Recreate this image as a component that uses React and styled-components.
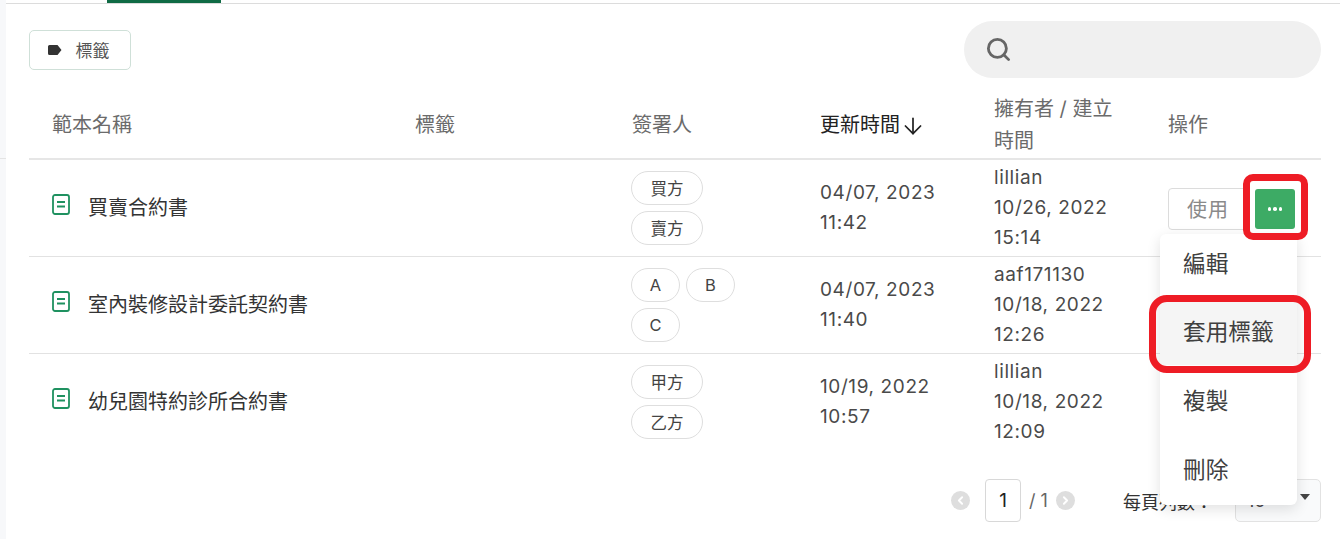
import React from 'react'
import styled, { createGlobalStyle } from 'styled-components'
import { Search, ArrowDown, ChevronLeft, ChevronRight } from 'lucide-react'

const GlobalStyle = createGlobalStyle`
  html, body {
    margin: 0;
    height: 539px;
    overflow: hidden;
    background: #fff;
    font-family: "Inter", "Noto Sans CJK TC", sans-serif;
    color: #3c3c3c;
  }
`

const rows = [
  { name: '買賣合約書', signers: ['買方', '賣方'], wide: true, updated: ['04/07, 2023', '11:42'], owner: ['lillian', '10/26, 2022', '15:14'], actions: true },
  { name: '室內裝修設計委託契約書', signers: ['A', 'B', 'C'], updated: ['04/07, 2023', '11:40'], owner: ['aaf171130', '10/18, 2022', '12:26'] },
  { name: '幼兒園特約診所合約書', signers: ['甲方', '乙方'], wide: true, updated: ['10/19, 2022', '10:57'], owner: ['lillian', '10/18, 2022', '12:09'] },
]

function DocIcon() {
  return (
    <svg width="18" height="21" viewBox="0 0 18 21" fill="none" stroke="#1f9160" strokeWidth="1.8">
      <rect x="1" y="1" width="16" height="19" rx="2" />
      <path d="M5 8h8M5 12.5h8" />
    </svg>
  )
}

function TagIcon() {
  return (
    <svg width="14" height="10" viewBox="0 0 14 10">
      <path d="M1.5 0H9.5L13.5 5L9.5 10H1.5A1.5 1.5 0 0 1 0 8.5V1.5A1.5 1.5 0 0 1 1.5 0Z" fill="#333" />
    </svg>
  )
}

function App() {
  return (
    <Shell>
      <GlobalStyle />
      <Sidebar><SidebarLine /></Sidebar>
      <Main>
        <Tabs><ActiveTab /></Tabs>
        <Content>
          <Toolbar>
            <TagButton><TagIcon />標籤</TagButton>
            <SearchBox><Search size={27} color="#666" strokeWidth={2.5} /></SearchBox>
          </Toolbar>
          <Table>
            <colgroup>
              <col width="363" />
              <col width="217" />
              <col width="188" />
              <col width="174" />
              <col width="174" />
              <col width="176" />
            </colgroup>
            <thead>
              <tr>
                <Th>範本名稱</Th>
                <Th>標籤</Th>
                <Th>簽署人</Th>
                <Th $active>更新時間<ArrowDown size={26} strokeWidth={1.6} /></Th>
                <Th>擁有者 / 建立時間</Th>
                <Th>操作</Th>
              </tr>
            </thead>
            <tbody>
              {rows.map((row) => (
                <tr key={row.name}>
                  <Td><NameCell><DocIcon />{row.name}</NameCell></Td>
                  <Td />
                  <Td>
                    <Signers>
                      {row.signers.map((s) => <Signer key={s} $wide={row.wide}>{s}</Signer>)}
                    </Signers>
                  </Td>
                  <Td><DateText>{row.updated.map((l) => <div key={l}>{l}</div>)}</DateText></Td>
                  <Td><DateText>{row.owner.map((l) => <div key={l}>{l}</div>)}</DateText></Td>
                  <Td>
                    {row.actions && (
                      <Actions>
                        <UseButton>使用</UseButton>
                        <MoreButton><Dot /><Dot /><Dot /></MoreButton>
                      </Actions>
                    )}
                  </Td>
                </tr>
              ))}
            </tbody>
          </Table>
          <Footer>
            <PageNav><ChevronLeft size={13} strokeWidth={3.5} color="#fff" /></PageNav>
            <PageInput>1</PageInput>
            <PageTotal>/ 1</PageTotal>
            <PageNav><ChevronRight size={13} strokeWidth={3.5} color="#fff" /></PageNav>
            <PerPage>每頁列數：</PerPage>
            <PerPageSelect>10<Caret /></PerPageSelect>
          </Footer>
        </Content>
      </Main>
      <Menu>
        <MenuItem>編輯</MenuItem>
        <MenuItem $hover>套用標籤</MenuItem>
        <MenuItem>複製</MenuItem>
        <MenuItem>刪除</MenuItem>
      </Menu>
      <MoreHighlight />
      <ItemHighlight />
    </Shell>
  )
}

export default App

const Shell = styled.div`
  position: relative;
  display: flex;
  width: 1340px;
  height: 539px;
  overflow: hidden;
`

const Sidebar = styled.div`
  width: 6px;
  flex: none;
  background: #f7f8fa;
  padding-top: 158px;
  box-sizing: border-box;
`

const SidebarLine = styled.div`
  height: 1px;
  background: #e4e4e4;
`

const Main = styled.div`
  flex: 1;
  min-width: 0;
`

const Tabs = styled.div`
  height: 4px;
  box-sizing: border-box;
  border-bottom: 1px solid #dcdcdc;
  padding-left: 101px;
`

const ActiveTab = styled.div`
  width: 114px;
  height: 3px;
  background: #0f6b45;
`

const Content = styled.div`
  padding: 17px 19px 0 23px;
`

const Toolbar = styled.div`
  display: flex;
  justify-content: space-between;
  align-items: center;
  height: 57px;
`

const TagButton = styled.div`
  width: 102px;
  height: 40px;
  box-sizing: border-box;
  display: flex;
  align-items: center;
  justify-content: center;
  gap: 14px;
  padding-right: 3px;
  border: 1px solid #cfe0d8;
  border-radius: 5px;
  font-size: 17px;
  color: #555;
`

const SearchBox = styled.div`
  width: 357px;
  height: 57px;
  box-sizing: border-box;
  display: flex;
  align-items: center;
  padding-left: 21px;
  background: #f0f0f0;
  border-radius: 29px;
`

const Table = styled.table`
  width: 1292px;
  margin-top: 12px;
  table-layout: fixed;
  border-collapse: collapse;
`

const Th = styled.th`
  height: 69px;
  padding: 2px 23px 0;
  box-sizing: border-box;
  text-align: left;
  vertical-align: middle;
  font-size: 20px;
  font-weight: 400;
  line-height: 32px;
  color: ${(p) => (p.$active ? '#222' : '#6b6b6b')};
  border-bottom: 2px solid #e6e6e6;

  svg {
    vertical-align: -7px;
  }
`

const Td = styled.td`
  height: 97px;
  padding: 0 23px;
  box-sizing: border-box;
  vertical-align: middle;
  border-bottom: 1px solid #e2e2e2;

  tr:last-child & {
    border-bottom: none;
  }
`

const NameCell = styled.div`
  display: flex;
  align-items: center;
  gap: 18px;
  padding-bottom: 2px;
  font-size: 20px;
  color: #333;

  svg {
    flex: none;
    margin-top: -5px;
  }
`

const Signers = styled.div`
  display: flex;
  flex-wrap: wrap;
  gap: 6px;
  width: 120px;
  margin-left: -1px;
`

const Signer = styled.div`
  width: ${(p) => (p.$wide ? '72px' : '49px')};
  height: 34px;
  box-sizing: border-box;
  display: flex;
  align-items: center;
  justify-content: center;
  border: 1px solid #dedede;
  border-radius: 17px;
  font-size: 16.5px;
  color: #444;
`

const DateText = styled.div`
  font-size: 19px;
  line-height: 30px;
  color: #4a4a4a;
  white-space: nowrap;
  letter-spacing: 0.6px;
`

const Actions = styled.div`
  display: flex;
  align-items: center;
  gap: 7px;
  margin-top: 2px;
`

const UseButton = styled.div`
  width: 80px;
  height: 42px;
  flex: none;
  box-sizing: border-box;
  display: flex;
  align-items: center;
  justify-content: center;
  border: 1px solid #dcdcdc;
  border-radius: 4px;
  font-size: 20px;
  letter-spacing: 1px;
  color: #8a8a8a;
`

const MoreButton = styled.div`
  width: 40px;
  height: 40px;
  flex: none;
  display: flex;
  align-items: center;
  justify-content: center;
  gap: 2px;
  background: #3dab65;
  border-radius: 3px;
`

const Dot = styled.span`
  width: 3.5px;
  height: 3.5px;
  border-radius: 50%;
  background: #fff;
`

const Footer = styled.div`
  display: flex;
  align-items: center;
  height: 43px;
  margin-top: 29px;
  padding-left: 922px;
`

const PageNav = styled.div`
  width: 19px;
  height: 19px;
  flex: none;
  display: flex;
  align-items: center;
  justify-content: center;
  background: #dedede;
  border-radius: 50%;
`

const PageInput = styled.div`
  width: 36px;
  height: 43px;
  flex: none;
  box-sizing: border-box;
  margin-left: 15px;
  display: flex;
  align-items: center;
  justify-content: center;
  border: 1px solid #d8d8d8;
  border-radius: 4px;
  font-size: 19px;
  color: #222;
`

const PageTotal = styled.div`
  width: 35px;
  flex: none;
  padding-left: 8px;
  box-sizing: border-box;
  font-size: 18px;
  color: #666;
  white-space: nowrap;
`

const PerPage = styled.div`
  width: 112px;
  flex: none;
  margin-left: 48px;
  font-size: 18px;
  color: #333;
  white-space: nowrap;
`

const PerPageSelect = styled.div`
  width: 86px;
  height: 43px;
  flex: none;
  box-sizing: border-box;
  display: flex;
  align-items: center;
  justify-content: space-between;
  padding: 0 18px 0 11px;
  background: #f9fafb;
  border: 1px solid #e2e2e2;
  border-radius: 5px;
  font-size: 18px;
  color: #444;
`

const Caret = styled.span`
  border-left: 5px solid transparent;
  border-right: 5px solid transparent;
  border-top: 6px solid #444;
  margin-top: -8px;
  margin-right: -8px;
`

const Menu = styled.div`
  position: absolute;
  left: 1160px;
  top: 234px;
  width: 137px;
  height: 271px;
  background: #fff;
  border-radius: 6px;
  box-shadow: 0 4px 14px rgba(0, 0, 0, 0.12);
  display: flex;
  flex-direction: column;
  overflow: hidden;
`

const MenuItem = styled.div`
  height: 68.6px;
  flex: none;
  display: flex;
  align-items: center;
  padding-left: 23px;
  font-size: 22.7px;
  color: #404040;
  white-space: nowrap;
  background: ${(p) => (p.$hover ? '#f5f5f5' : 'transparent')};

  &:first-child {
    margin-top: -6px;
  }
`

const MoreHighlight = styled.div`
  position: absolute;
  left: 1243px;
  top: 174px;
  width: 65px;
  height: 66px;
  box-sizing: border-box;
  border: 7px solid #ee1c25;
  border-radius: 10px;
`

const ItemHighlight = styled.div`
  position: absolute;
  left: 1149px;
  top: 295px;
  width: 162px;
  height: 78px;
  box-sizing: border-box;
  border: 7px solid #ee1c25;
  border-radius: 18px;
`
